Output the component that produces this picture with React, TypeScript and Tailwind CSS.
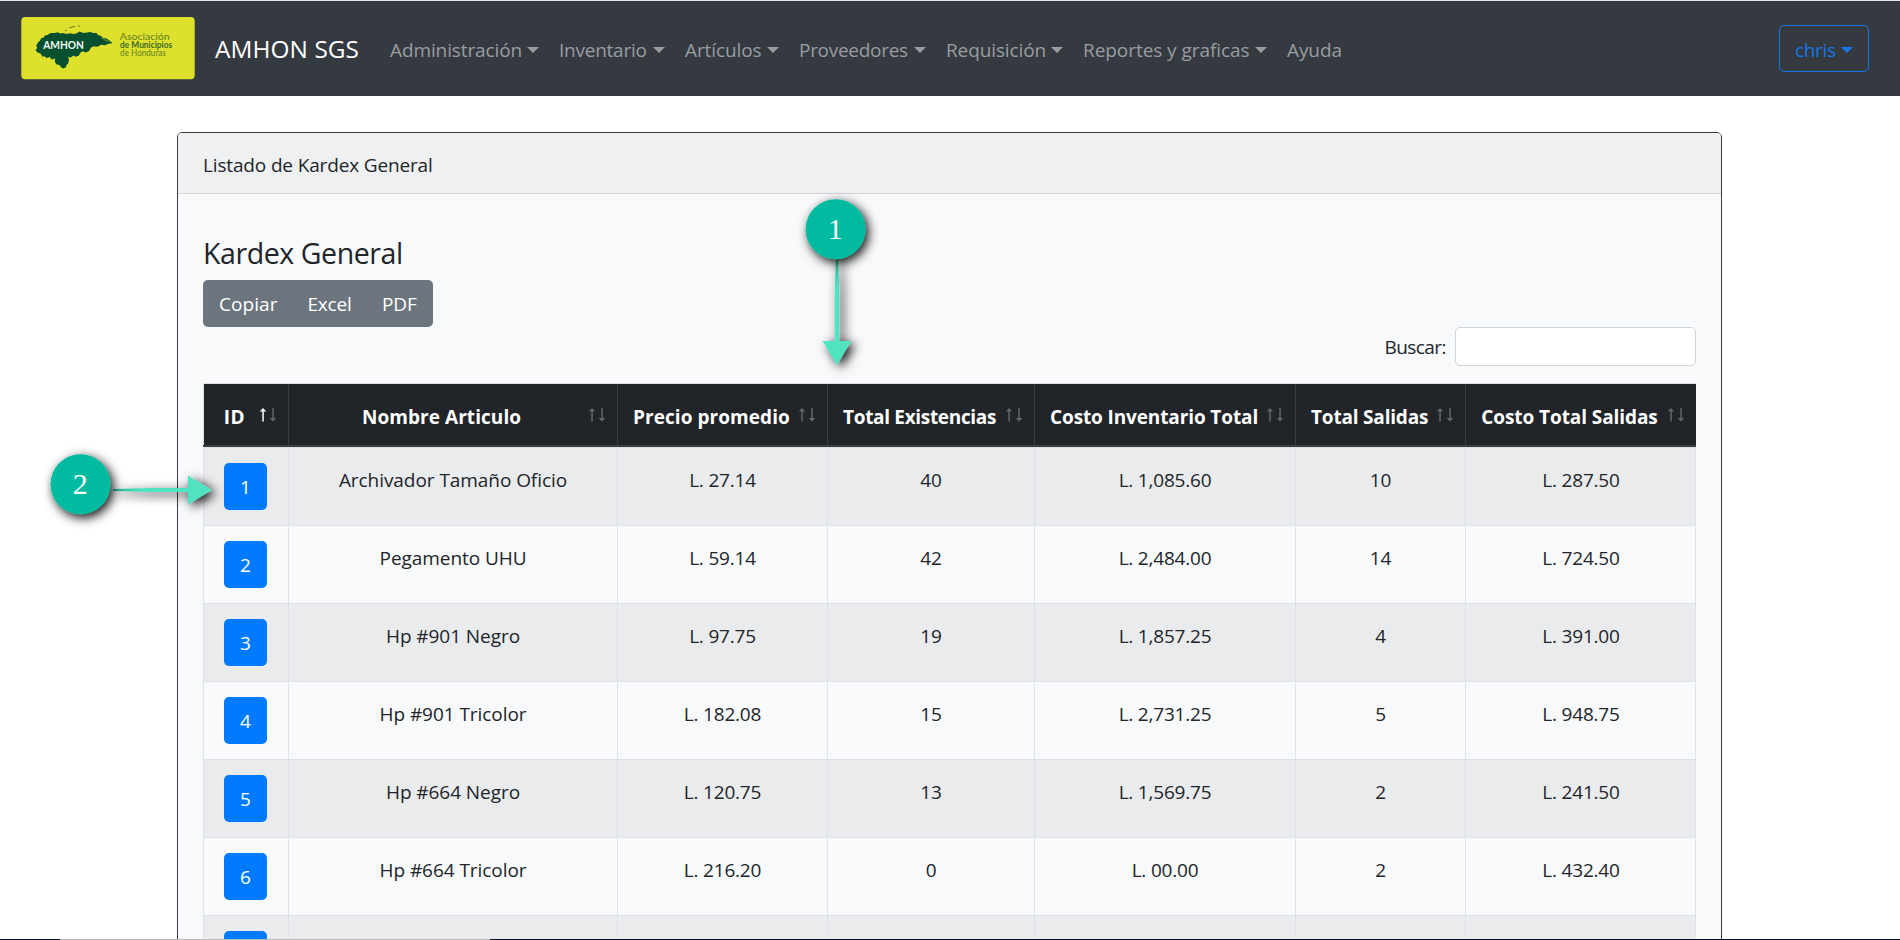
type NavEntry = { label: string; box: string };

const NAV: NavEntry[] = [
  { label: 'Administración', box: 'w-[137px] tracking-[-0.11px]' },
  { label: 'Inventario', box: 'w-[94px] tracking-[-0.24px]' },
  { label: 'Artículos', box: 'w-[82px] tracking-[-0.1px]' },
  { label: 'Proveedores', box: 'w-[115px] tracking-[-0.29px]' },
  { label: 'Requisición', box: 'w-[105px] tracking-[-0.11px]' },
  { label: 'Reportes y graficas', box: 'w-[172px] tracking-[-0.06px]' },
];

const HEADERS = [
  { label: 'ID', track: 'tracking-[0.6px]' },
  { label: 'Nombre Articulo', track: 'tracking-[0.06px]' },
  { label: 'Precio promedio', track: 'tracking-[0.06px]' },
  { label: 'Total Existencias', track: 'tracking-[-0.32px]' },
  { label: 'Costo Inventario Total', track: 'tracking-[-0.12px]' },
  { label: 'Total Salidas', track: 'tracking-[-0.19px]' },
  { label: 'Costo Total Salidas', track: 'tracking-[-0.08px]' },
];

const ROWS: string[][] = [
  ['1', 'Archivador Tamaño Oficio', 'L. 27.14', '40', 'L. 1,085.60', '10', 'L. 287.50'],
  ['2', 'Pegamento UHU', 'L. 59.14', '42', 'L. 2,484.00', '14', 'L. 724.50'],
  ['3', 'Hp #901 Negro', 'L. 97.75', '19', 'L. 1,857.25', '4', 'L. 391.00'],
  ['4', 'Hp #901 Tricolor', 'L. 182.08', '15', 'L. 2,731.25', '5', 'L. 948.75'],
  ['5', 'Hp #664 Negro', 'L. 120.75', '13', 'L. 1,569.75', '2', 'L. 241.50'],
  ['6', 'Hp #664 Tricolor', 'L. 216.20', '0', 'L. 00.00', '2', 'L. 432.40'],
  ['', '', '', '', '', '', ''],
];

const COLS = 'grid grid-cols-[85px_329px_210px_207px_261px_170px_231px]';

function Caret() {
  return (
    <span className="h-0 w-0 border-x-[6px] border-t-[6px] border-x-transparent border-t-current" />
  );
}

function Logo() {
  return (
    <svg viewBox="62 50 523 190" className="h-[63px] w-[174px] shrink-0" aria-label="AMHON">
      <rect x="62" y="50" width="523" height="188" rx="12" fill="#dde02c" />
      <path
        d="M105 150 L110 143 L107 137 L112 127 L118 122 L122 114 L129 112 L134 106 L141 104 L150 98 L163 98 L172 96 L180 100 L189 98 L198 101 L209 99 L220 101 L230 99 L237 94 L249 98 L262 97 L270 95 L279 98 L288 98 L295 105 L303 107 L309 113 L319 115 L328 121 L337 129 L325 131 L314 135 L303 134 L292 140 L280 138 L272 143 L266 153 L256 157 L247 153 L240 158 L236 166 L226 170 L219 166 L211 172 L203 171 L206 180 L203 190 L199 194 L196 202 L187 205 L181 200 L176 194 L168 193 L163 185 L164 175 L154 178 L147 171 L138 174 L132 168 L126 170 L120 160 L111 157 L105 150 Z"
        fill="#07502f"
      />
      <path d="M194 92 l5 -2 M207 83 l12 -4 l5 1 M233 78 l6 -2" stroke="#3f6528" strokeWidth="2.5" fill="none" />
      <path d="M302 111 l12 8 l14 5" stroke="#dde02c" strokeWidth="1.5" fill="none" />
      <text x="128" y="146" textLength="123" lengthAdjust="spacingAndGlyphs" fontFamily="Lato, sans-serif" fontWeight="700" fontSize="34" fill="#f3fbf2">AMHON</text>
      <text x="359" y="118" textLength="150" lengthAdjust="spacingAndGlyphs" fontFamily="Lato, sans-serif" fontSize="30" fill="#5f7f20">Asociación</text>
      <text x="360" y="143" textLength="157" lengthAdjust="spacingAndGlyphs" fontFamily="Lato, sans-serif" fontWeight="700" fontSize="27" fill="#3d6a26">de Municipios</text>
      <text x="360" y="168" textLength="138" lengthAdjust="spacingAndGlyphs" fontFamily="Lato, sans-serif" fontSize="27" fill="#5f7f20">de Honduras</text>
    </svg>
  );
}

function SortArrows({ ascending }: { ascending: boolean }) {
  return (
    <svg viewBox="0 0 18 14" className="absolute top-[24px] right-[11px] h-[14px] w-[18px]">
      <g fill={ascending ? '#ffffff' : '#62666a'}>
        <rect x="3.3" y="1" width="1.5" height="12.5" />
        <path d="M4 0 L7.3 3.6 H0.7 Z" />
      </g>
      <g fill="#62666a">
        <rect x="13.3" y="0" width="1.5" height="12.5" />
        <path d="M14 13.5 L17.3 10 H10.7 Z" />
      </g>
    </svg>
  );
}

function Callouts() {
  return (
    <svg
      viewBox="0 0 1900 940"
      className="pointer-events-none absolute top-0 left-0 h-[940px] w-[1900px]"
    >
      <defs>
        <filter id="soft" x="-60%" y="-60%" width="240%" height="240%" filterUnits="objectBoundingBox">
          <feDropShadow dx="3" dy="3.5" stdDeviation="5.5" floodColor="#000" floodOpacity="0.95" />
        </filter>
        <filter id="tail" x="0" y="150" width="1900" height="400" filterUnits="userSpaceOnUse">
          <feDropShadow dx="4" dy="3" stdDeviation="5.5" floodColor="#000" floodOpacity="0.95" />
        </filter>
        <linearGradient id="down" x1="0" y1="0" x2="0" y2="1">
          <stop offset="0" stopColor="#27b394" />
          <stop offset="0.3" stopColor="#50e3c2" />
        </linearGradient>
        <linearGradient id="right" x1="0" y1="0" x2="1" y2="0">
          <stop offset="0" stopColor="#27b394" />
          <stop offset="0.3" stopColor="#50e3c2" />
        </linearGradient>
      </defs>
      <path filter="url(#tail)" fill="url(#down)" d="M836 255 H838 L839.2 290 V341 H851.3 L837 365 L822.7 341 H834.8 V290 Z" />
      <circle filter="url(#soft)" cx="835.6" cy="229.3" r="30" fill="#03bba0" />
      <text x="835.2" y="239.3" textAnchor="middle" fontFamily="'Liberation Serif', serif" fontSize="30" fill="#fff">1</text>
      <path filter="url(#tail)" fill="url(#right)" d="M113 489 L150 488 H188 V475.5 L212 490 L188 504.5 V492 H150 L113 491 Z" />
      <circle filter="url(#soft)" cx="80.5" cy="484.3" r="30" fill="#03bba0" />
      <text x="80.2" y="494" textAnchor="middle" fontFamily="'Liberation Serif', serif" fontSize="30" fill="#fff">2</text>
    </svg>
  );
}

export default function App() {
  return (
    <div className="relative flex h-[940px] w-[1900px] flex-col overflow-hidden bg-white font-['Open_Sans',sans-serif] text-[19px] leading-[32px] text-[#212529]">
      <div className="h-px shrink-0 bg-[#dfe8e8]" />
      <nav className="flex h-[95px] shrink-0 items-center bg-[#343a40] pr-[31px] pl-[21px]">
        <Logo />
        <span className="ml-5 w-[175px] pt-px text-[24.4px] tracking-[0.06px] whitespace-nowrap text-white">AMHON SGS</span>
        <div className="flex flex-1 items-center pt-[2px] text-[#9a9da0]">
          {NAV.map((n) => (
            <a key={n.label} className="mr-5 flex items-center">
              <span className={`whitespace-nowrap ${n.box}`}>{n.label}</span>
              <Caret />
            </a>
          ))}
          <a className="tracking-[-0.08px]">Ayuda</a>
        </div>
        <button className="flex h-[47px] w-[90px] items-center rounded-[5px] border border-[#1677e8] pt-[2px] pl-[15px] text-[#1677e8]">
          <span className="w-[46px] text-left tracking-[-0.33px]">chris</span>
          <Caret />
        </button>
      </nav>

      <main className="min-h-0 flex-1 overflow-hidden pt-9 pl-[177px]">
        <section className="h-[1000px] w-[1545px] rounded-[5px] border border-[#343a40] bg-[#f8f9fb]">
          <header className="h-[61px] rounded-t-[4px] border-b border-[#d2d4d6] bg-[#eff0f2] px-[25px] pt-[16px] tracking-[-0.15px]">
            Listado de Kardex General
          </header>
          <div className="px-[25px] pt-10">
            <h4 className="h-[46px] pt-px text-[28.5px] leading-[37px] tracking-[-0.42px]">Kardex General</h4>
            <div className="flex h-[47px] w-[230px] rounded-[5px] bg-[#6c757d] pt-[8px] text-white">
              <button className="h-8 w-[88.5px] pl-[16px] text-left tracking-[0.05px]">Copiar</button>
              <button className="h-8 w-[74.5px] pl-[16px] text-left tracking-[-0.19px]">Excel</button>
              <button className="h-8 pl-[16px] text-left tracking-[-0.11px]">PDF</button>
            </div>
            <div className="flex h-[56px] items-start justify-end">
              <label className="mr-[9px] pt-1 tracking-[-0.55px]">Buscar:</label>
              <input className="h-[39px] w-[241px] rounded-[5px] border border-[#ced4da] bg-white" />
            </div>

            <div className="w-[1493px] border-t border-[#dee2e6]">
              <div className={`${COLS} h-[63px] border-b-2 border-[#383e44] bg-[#212529]`}>
                {HEADERS.map((h, i) => (
                  <div
                    key={h.label}
                    className={`relative border-l pt-[17px] pr-[38px] pl-[15px] text-center font-bold whitespace-nowrap text-white ${i === 0 ? 'border-[#dee2e6]' : 'border-[#383e44]'} ${h.track}`}
                  >
                    {h.label}
                    <SortArrows ascending={i === 0} />
                  </div>
                ))}
              </div>
              {ROWS.map((row, r) => (
                <div key={r} className={`${COLS} h-[78px] border-r border-[#dee2e6] ${r % 2 ? 'bg-[#f8f9fb]' : 'bg-[#eaebed]'}`}>
                  {row.map((cell, c) => (
                    <div key={c} className={`border-t border-l border-[#dee2e6] text-center ${c === 0 ? 'pt-[15px]' : 'pt-[16px]'} ${c > 1 ? 'tracking-[-0.2px]' : 'tracking-[-0.06px]'}`}>
                      {c === 0 ? (
                        <button className="ml-5 block h-[47px] w-[43px] rounded-[5px] bg-[#007bff] pt-px text-white">{cell}</button>
                      ) : (
                        cell
                      )}
                    </div>
                  ))}
                </div>
              ))}
            </div>
          </div>
        </section>
      </main>

      <div className="flex h-px shrink-0 bg-[#081226]">
        <div className="ml-[60px] h-px w-[430px] bg-[#b8babc]" />
      </div>
      <Callouts />
    </div>
  );
}
